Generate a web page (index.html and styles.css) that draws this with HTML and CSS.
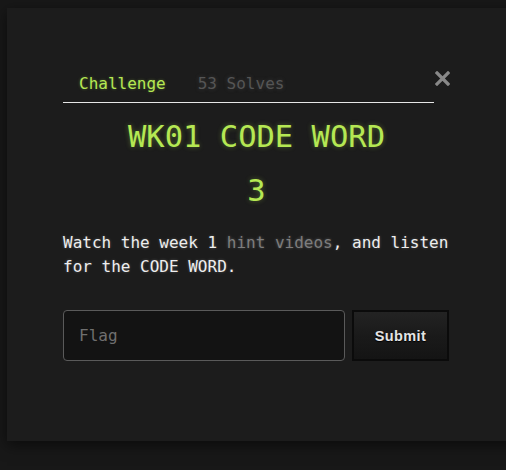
FILE: index.html
```html
<!DOCTYPE html>
<html>
<head>
<meta charset="utf-8">
<link rel="stylesheet" href="styles.css">
</head>
<body>
<div class="modal">
  <div class="head">
    <nav class="tabs">
      <span class="tab active">Challenge</span>
      <span class="tab">53 Solves</span>
    </nav>
    <span class="close"><svg width="15" height="15" viewBox="0 0 15 15"><path d="M2 2 L13 13 M13 2 L2 13" stroke="#888" stroke-width="3.2" stroke-linecap="square" fill="none"/></svg></span>
  </div>
  <h2 class="title">WK01 CODE WORD</h2>
  <h2 class="value">3</h2>
  <p class="desc">Watch the week 1 <span class="link">hint videos</span>, and listen for the CODE WORD.</p>
  <form class="row">
    <input class="flag" type="text" placeholder="Flag">
    <button class="submit" type="button">Submit</button>
  </form>
</div>
</body>
</html>
```
FILE: styles.css
```css
html, body {
  margin: 0;
  padding: 0;
  background: #181818;
  overflow: hidden;
  height: 470px;
}
.modal {
  box-sizing: border-box;
  margin: 8px 0 0 7px;
  width: 510px;
  height: 433px;
  background: #1c1c1c;
  box-shadow: 0 4px 14px rgba(0,0,0,0.55);
  padding: 54px 57px 0 56px;
  font-family: "DejaVu Sans Mono", monospace;
  color: #eaeaea;
}
.head {
  display: flex;
  align-items: flex-start;
  width: 387px;
}
.tabs {
  flex: 1;
  display: flex;
  border-bottom: 1px solid #e6e6e6;
}
.tab {
  padding: 12px 16px 8px 16px;
  font-size: 16px;
  line-height: 20px;
  color: #555;
  text-shadow: 0 0 4px rgba(120,120,120,0.35);
}
.tab.active {
  color: #b5e853;
  text-shadow: 0 0 3px rgba(181,232,83,0.35);
}
.close {
  display: block;
  width: 15px;
  height: 15px;
  margin: 9px 0 0 1px;
}
.close svg {
  display: block;
}
.title, .value {
  margin: 0;
  width: 387px;
  text-align: center;
  font-weight: normal;
  font-size: 30.5px;
  color: #b5e853;
  text-shadow: 0 0 5px rgba(181,232,83,0.35);
}
.title {
  margin-top: 16px;
  line-height: 36px;
}
.value {
  margin-top: 18px;
  line-height: 36px;
}
.desc {
  margin: 22px 0 0 0;
  width: 400px;
  font-size: 16px;
  line-height: 24px;
  color: #eeeeee;
  text-shadow: 0 0 3px rgba(255,255,255,0.25);
}
.link {
  color: #7d7d7d;
}
.row {
  display: flex;
  gap: 7px;
  margin-top: 31px;
  width: 386px;
}
.flag {
  box-sizing: border-box;
  width: 282px;
  height: 51px;
  background: #131313;
  border: 1px solid #5a5a5a;
  border-radius: 4px;
  padding: 0 15px;
  font-family: "DejaVu Sans Mono", monospace;
  font-size: 16px;
  color: #ddd;
  outline: none;
}
.flag::placeholder {
  color: #6f6f6f;
}
.submit {
  box-sizing: border-box;
  width: 97px;
  height: 51px;
  background: linear-gradient(#232323, #1a1a1a 50%, #141414);
  border: 2px solid #0b0b0b;
  border-radius: 0;
  font-family: "Liberation Sans", Arial, sans-serif;
  font-weight: bold;
  font-size: 14.5px;
  letter-spacing: 0.4px;
  color: #e4e4e4;
  text-shadow: 0 1px 1px #000;
  padding: 0;
}
```
